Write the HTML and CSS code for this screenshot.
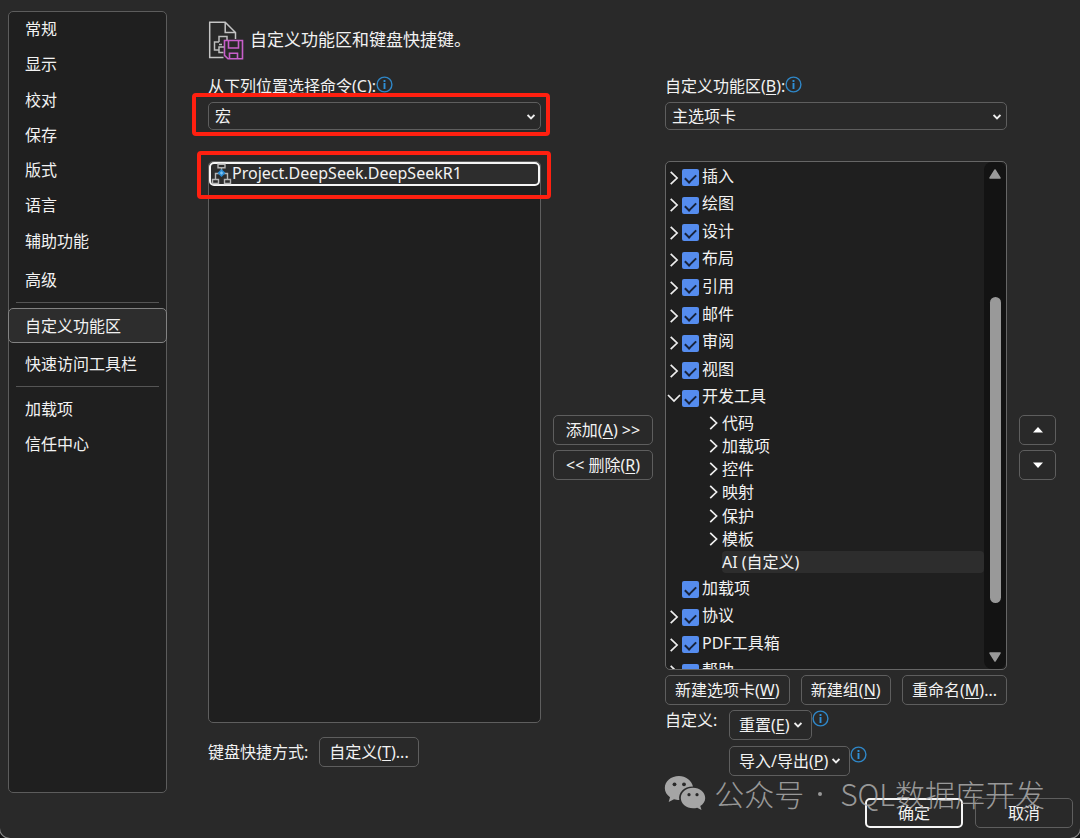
FILE: index.html
```html
<!DOCTYPE html>
<html lang="zh-CN">
<head>
<meta charset="utf-8">
<title>自定义功能区</title>
<link rel="stylesheet" href="styles.css">
</head>
<body>
<svg class="defs" width="0" height="0" aria-hidden="true">
  <symbol id="right" viewBox="0 0 9 14"><path d="M1.200 .9 7.600 7 1.200 13.100" fill="none" stroke="#eee" stroke-width="1.700"/></symbol>
  <symbol id="open" viewBox="0 0 14 9"><path d="M1 1.500 7 7.600 13 1.500" fill="none" stroke="#eee" stroke-width="1.700"/></symbol>
  <symbol id="down" viewBox="0 0 8 6"><path d="M.6 1 4 4.400 7.400 1" fill="none" stroke="#eee" stroke-width="1.800"/></symbol>
  <symbol id="info" viewBox="0 0 17 17"><circle cx="8.500" cy="8.500" r="7.400" fill="none" stroke="#2f87c8" stroke-width="1.400"/><path d="M8.500 7v6M8.500 4v2" stroke="#2f8fd6" stroke-width="1.900"/></symbol>
</svg>
<div class="dialog">
  <nav class="sidebar">
    <div class="nav-group">
      <button>常规</button><button>显示</button><button>校对</button><button>保存</button><button>版式</button><button>语言</button><button>辅助功能</button>
    </div>
    <button class="advanced">高级</button>
    <hr>
    <button class="current">自定义功能区</button>
    <button>快速访问工具栏</button>
    <hr>
    <button>加载项</button>
    <button>信任中心</button>
  </nav>

  <main class="main">
    <header class="title">
      <svg width="36" height="39" viewBox="0 0 36 39" fill="none" aria-hidden="true">
        <path d="M15.500 36.500H1.700V1.200h15.500L27.500 11.500v6.500M17.200 1.200v10.300h10.300" stroke="#c4c4c4" stroke-width="1.500"/>
        <path d="M15.500 31.500h-4.500v-5.500h5M11 21H6.500v8H11M11 21v-5.500h8v4M14 23.500h-3" stroke="#bdbdbd" stroke-width="1.500"/>
        <path d="M16.500 19.500h18v18.300H20l-3.500-3.500zM20.500 19.500v7.500h10v-7.500M21.500 37.800v-5.500h8v5.500" stroke="#c75fc9" stroke-width="1.600"/>
      </svg>
      <h1>自定义功能区和键盘快捷键。</h1>
    </header>

    <div class="columns">
      <section class="column source">
        <div class="caption"><label for="from">从下列位置选择命令(<u>C</u>):</label><svg class="info"><use href="#info"/></svg></div>
        <div class="picker">
          <select id="from"><option>宏</option></select>
          <svg class="arrow"><use href="#down"/></svg>
          <span class="mark mark-picker"></span>
        </div>
        <div class="commands">
          <button class="command">
            <svg width="21" height="22" viewBox="0 0 21 22" fill="none" aria-hidden="true">
              <path d="M7 1.200h7v3.500H7zM1.500 16.500h6v4h-6zM13.500 16.500h6v4h-6zM4.500 16v-5.500h12V16M10.500 5v2" stroke="#b5b5b5" stroke-width="1.400"/>
              <path d="M10.500 6 14.500 10 10.500 14 6.500 10z" fill="#2b8bd3"/><path d="m10.500 8.300 1.700 1.700-1.700 1.700-1.700-1.700z" fill="#7cc3f2"/>
            </svg>
            <span class="command-name">Project.DeepSeek.DeepSeekR1</span>
            <span class="mark mark-command"></span>
          </button>
        </div>
        <div class="keyboard"><span>键盘快捷方式:</span><button class="btn">自定义(<u>T</u>)...</button></div>
      </section>

      <div class="stack transfer">
        <button class="btn">添加(<u>A</u>) &gt;&gt;</button>
        <button class="btn">&lt;&lt; 删除(<u>R</u>)</button>
      </div>

      <section class="column target">
        <div class="caption"><label for="ribbon">自定义功能区(<u>B</u>):</label><svg class="info"><use href="#info"/></svg></div>
        <div class="picker">
          <select id="ribbon"><option>主选项卡</option></select>
          <svg class="arrow"><use href="#down"/></svg>
        </div>
        <div class="tree">
          <div class="tree-body">
            <div class="tabs tabs-top">
              <div class="tab"><svg class="chev"><use href="#right"/></svg><input type="checkbox" id="t1" checked><label for="t1">插入</label></div>
              <div class="tab"><svg class="chev"><use href="#right"/></svg><input type="checkbox" id="t2" checked><label for="t2">绘图</label></div>
              <div class="tab"><svg class="chev"><use href="#right"/></svg><input type="checkbox" id="t3" checked><label for="t3">设计</label></div>
              <div class="tab"><svg class="chev"><use href="#right"/></svg><input type="checkbox" id="t4" checked><label for="t4">布局</label></div>
              <div class="tab"><svg class="chev"><use href="#right"/></svg><input type="checkbox" id="t5" checked><label for="t5">引用</label></div>
              <div class="tab"><svg class="chev"><use href="#right"/></svg><input type="checkbox" id="t6" checked><label for="t6">邮件</label></div>
              <div class="tab"><svg class="chev"><use href="#right"/></svg><input type="checkbox" id="t7" checked><label for="t7">审阅</label></div>
              <div class="tab"><svg class="chev"><use href="#right"/></svg><input type="checkbox" id="t8" checked><label for="t8">视图</label></div>
              <div class="tab"><svg class="chev"><use href="#open"/></svg><input type="checkbox" id="t9" checked><label for="t9">开发工具</label></div>
            </div>
            <div class="groups">
              <div class="group"><svg class="chev"><use href="#right"/></svg><span>代码</span></div>
              <div class="group"><svg class="chev"><use href="#right"/></svg><span>加载项</span></div>
              <div class="group"><svg class="chev"><use href="#right"/></svg><span>控件</span></div>
              <div class="group"><svg class="chev"><use href="#right"/></svg><span>映射</span></div>
              <div class="group"><svg class="chev"><use href="#right"/></svg><span>保护</span></div>
              <div class="group"><svg class="chev"><use href="#right"/></svg><span>模板</span></div>
              <div class="group"><svg class="chev"></svg><span class="picked">AI (自定义)</span></div>
            </div>
            <div class="tabs tabs-bottom">
              <div class="tab"><svg class="chev"></svg><input type="checkbox" id="t10" checked><label for="t10">加载项</label></div>
              <div class="tab"><svg class="chev"><use href="#right"/></svg><input type="checkbox" id="t11" checked><label for="t11">协议</label></div>
              <div class="tab"><svg class="chev"><use href="#right"/></svg><input type="checkbox" id="t12" checked><label for="t12">PDF工具箱</label></div>
              <div class="tab"><svg class="chev"><use href="#right"/></svg><input type="checkbox" id="t13" checked><label for="t13">帮助</label></div>
            </div>
          </div>
          <div class="scrollbar">
            <svg width="12" height="10" viewBox="0 0 12 10"><path d="M6 1 11 9H1z" fill="#999" stroke="#999" stroke-width="1.500" stroke-linejoin="round"/></svg>
            <div class="rail"><div class="thumb"></div></div>
            <svg width="12" height="10" viewBox="0 0 12 10"><path d="M6 9 11 1H1z" fill="#999" stroke="#999" stroke-width="1.500" stroke-linejoin="round"/></svg>
          </div>
        </div>
        <div class="tree-actions">
          <button class="btn">新建选项卡(<u>W</u>)</button>
          <button class="btn">新建组(<u>N</u>)</button>
          <button class="btn">重命名(<u>M</u>)...</button>
        </div>
        <div class="custom">
          <span class="custom-label">自定义:</span>
          <div class="custom-row"><button class="btn">重置(<u>E</u>)<svg class="caret"><use href="#down"/></svg></button><svg class="info"><use href="#info"/></svg></div>
          <div class="custom-row"><button class="btn">导入/导出(<u>P</u>)<svg class="caret"><use href="#down"/></svg></button><svg class="info"><use href="#info"/></svg></div>
        </div>
      </section>

      <div class="stack movers">
        <button class="btn" aria-label="上移"><svg width="10" height="6" viewBox="0 0 10 6"><path d="M5 0 10 5.500H0z" fill="#fff"/></svg></button>
        <button class="btn" aria-label="下移"><svg width="10" height="6" viewBox="0 0 10 6"><path d="M5 6 10 .5H0z" fill="#fff"/></svg></button>
      </div>
    </div>
  </main>

  <footer class="footer">
    <button class="btn primary">确定</button>
    <button class="btn">取消</button>
  </footer>

  <div class="watermark">
    <svg width="42" height="36" viewBox="0 0 42 36" aria-hidden="true">
      <path fill="#c4c4c4" d="M15 1C7 1 .8 6.200.8 13c0 3.800 2 7 5.200 9.200L4.700 27l5.300-2.700c1.700.5 3.200.7 5.300.7C14 17.500 20 11.500 29 11.600 27.600 5.400 21.700 1 15 1z"/>
      <path fill="#c4c4c4" d="M29 12.800c-6.800 0-12.200 4.500-12.200 10.200S22.200 33.300 29 33.300c1.500 0 2.900-.2 4.200-.6L37.500 35l-1.200-3.900c3-1.900 4.900-4.800 4.900-8.100 0-5.700-5.400-10.200-12.200-10.200z"/>
      <g fill="#292929"><circle cx="10.500" cy="9.300" r="1.900"/><circle cx="20" cy="9.300" r="1.900"/><circle cx="25" cy="19.700" r="1.600"/><circle cx="33" cy="19.700" r="1.600"/></g>
    </svg>
    <span>公众号</span><span class="dot"></span><span>SQL数据库开发</span>
  </div>
</div>
</body>
</html>
```
FILE: styles.css
```css
* { box-sizing: border-box; }
body {
  margin: 0;
  background: #121212;
  color: #f2f2f2;
  font: 16px/20px "Noto Sans", "Noto Sans CJK SC", sans-serif;
}
button, select, input { font: inherit; color: inherit; margin: 0; }
button { background: none; border: 0; padding: 0; }
svg { display: block; flex: none; }
.defs { position: absolute; }
u { text-underline-offset: 2px; }

.dialog {
  position: relative;
  display: grid;
  grid-template-columns: 159px minmax(0, 1fr);
  grid-template-rows: 1fr auto;
  column-gap: 41px;
  row-gap: 5px;
  min-height: 100vh;
  padding: 11px 7px 10px 8px;
  background: #292929;
  border-radius: 0 0 10px 10px;
  box-shadow: 0 0 0 1px #8a8a8a;
}

.sidebar {
  display: flex;
  flex-direction: column;
  background: #1f1f1f;
  border: 1px solid #5c5c5c;
  border-radius: 5px;
}
.nav-group { display: grid; grid-auto-rows: 1fr; height: 247px; }
.sidebar button { height: 35px; padding: 0 16px 1px; text-align: left; }
.sidebar .advanced { margin-top: 4px; }
.sidebar hr {
  width: calc(100% - 14px);
  height: 1px;
  margin: 4px auto 5px;
  border: 0;
  background: #555;
}
.sidebar .current {
  margin: 0 -1px 4px;
  padding: 0 16px;
  background: #2d2d2d;
  border: 1px solid #828282;
  border-radius: 5px;
}

.main { padding: 8px 17px 0 0; }
.title { display: flex; align-items: center; gap: 6px; height: 42px; }
.title h1 { margin: 0; font-size: 17px; font-weight: 400; line-height: 24px; }

.columns {
  display: grid;
  grid-template-columns: minmax(0, 333fr) 100px minmax(0, 342fr) 37px;
  column-gap: 12px;
  margin-top: 15px;
}
.column { display: flex; flex-direction: column; min-width: 0; }
.caption { display: flex; height: 26px; }
.info { width: 17px; height: 17px; }

.picker { position: relative; height: 28px; margin-bottom: 31px; }
.picker select {
  width: 100%;
  height: 100%;
  padding: 0 6px;
  background: #292929;
  border: 1px solid #5e5e5e;
  border-radius: 5px;
  appearance: none;
}
.arrow { position: absolute; right: 6px; top: 12px; width: 8px; height: 6px; }

.mark {
  position: absolute;
  border: 4px solid #ff2010;
  border-radius: 4px;
  pointer-events: none;
}
.mark-picker { inset: -9px -9px -6px -16px; }
.mark-command { inset: -13px -13px -15px -14px; }

.commands {
  flex: 1;
  background: #1f1f1f;
  border: 1px solid #5e5e5e;
  border-radius: 5px;
}
.command {
  position: relative;
  display: flex;
  align-items: center;
  width: 100%;
  height: 24px;
  background: #2d2d2d;
  border: 2px solid #f5f5f5;
  border-radius: 5px;
}
.command-name { padding-bottom: 2px; }
.keyboard { display: flex; align-items: center; gap: 11px; padding: 14px 0 9px; }

.btn {
  display: flex;
  align-items: center;
  justify-content: center;
  height: 30px;
  padding: 0 9px;
  background: #292929;
  border: 1px solid #5e5e5e;
  border-radius: 5px;
  white-space: nowrap;
}
.stack { display: flex; flex-direction: column; gap: 5px; padding-top: 339px; }
.stack .btn { padding: 0; }

.tree {
  display: flex;
  height: 509px;
  background: #1f1f1f;
  border: 1px solid #666;
  border-radius: 5px;
  overflow: hidden;
}
.tree-body { flex: 1; min-width: 0; }
.tabs { display: grid; grid-auto-rows: 1fr; }
.tabs-top { height: 248px; }
.tabs-bottom { height: 110px; }
.tab { display: flex; align-items: center; padding-left: 1px; }
.tab .chev { width: 14px; height: 14px; margin-top: 4px; }
.tab input {
  appearance: none;
  display: grid;
  justify-items: center;
  align-items: start;
  width: 17px;
  height: 17px;
  padding-top: 5px;
  margin: 4px 3px 0 1px;
  background: #558cee;
  border-radius: 2px;
}
.tab input:checked::before {
  content: "";
  width: 9px;
  height: 5px;
  border: solid #18233a;
  border-width: 0 0 2px 2px;
  transform: rotate(-45deg);
}
.groups { display: grid; grid-auto-rows: 1fr; height: 164px; padding: 1px 0 0 40px; }
.group { display: flex; align-items: center; gap: 1px; }
.group .chev { width: 15px; height: 14px; }
.group span { flex: 1; line-height: 22px; }
.group .picked { background: #2d2d2d; border-radius: 4px; }

.scrollbar {
  display: flex;
  flex-direction: column;
  align-items: center;
  gap: 6px;
  width: 22px;
  padding: 7px 0;
  background: #131313;
  border-radius: 8px;
}
.rail { flex: 1; padding-top: 112px; }
.thumb { width: 11px; height: 306px; background: #999; border-radius: 6px; }

.tree-actions { display: flex; justify-content: space-between; padding: 5px 0; }
.custom { display: grid; grid-template-columns: 64px 1fr; row-gap: 6px; }
.custom-label { line-height: 20px; }
.custom-row { display: flex; grid-column: 2; }
.caret { width: 8px; height: 6px; margin-left: 4px; }

.footer { grid-column: 1 / -1; display: flex; justify-content: flex-end; gap: 12px; }
.footer .btn { width: 98px; }
.footer .primary { border: 2px solid #f5f5f5; }

.watermark {
  position: absolute;
  right: 35px;
  bottom: 25px;
  display: flex;
  align-items: center;
  color: #b4b4b4;
  font: 300 30px/40px "Noto Sans CJK SC", sans-serif;
  opacity: .8;
  pointer-events: none;
}
.watermark svg { margin-right: 8px; }
.dot {
  width: 4px;
  height: 4px;
  margin: 2px 18px 0 14px;
  background: #b4b4b4;
  border-radius: 50%;
}
```
